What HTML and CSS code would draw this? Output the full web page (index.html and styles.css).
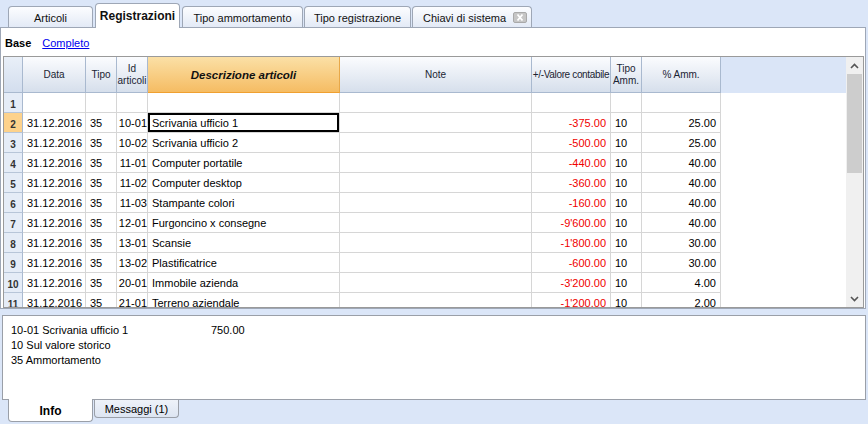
FILE: index.html
```html
<!DOCTYPE html>
<html lang="it">
<head>
<meta charset="utf-8">
<title>Registrazioni</title>
<link rel="stylesheet" href="styles.css">
</head>
<body>
<div class="app">
  <div class="tabbar">
    <div class="tab t-articoli">Articoli</div>
    <div class="tab active t-reg">Registrazioni</div>
    <div class="tab t-tipoamm">Tipo ammortamento</div>
    <div class="tab t-tiporeg">Tipo registrazione</div>
    <div class="tab t-chiavi"><span>Chiavi di sistema</span>
      <span class="close"><svg width="14" height="11" viewBox="0 0 14 11"><rect x="0.5" y="0.5" width="13" height="10" rx="1.5" fill="#c6c6c6" stroke="#a9a9a9"/><path d="M4.5 2.5 L9.5 8.5 M9.5 2.5 L4.5 8.5" stroke="#fff" stroke-width="1.8"/></svg></span>
    </div>
  </div>

  <div class="panel">
    <div class="toolbar"><span class="view-cur">Base</span><span class="view-link">Completo</span></div>
    <div class="grid">
      <div class="sheet">
        <div class="row head">
          <div class="c rn"></div>
          <div class="c">Data</div>
          <div class="c">Tipo</div>
          <div class="c two">Id<br>articoli</div>
          <div class="c hl">Descrizione articoli</div>
          <div class="c">Note</div>
          <div class="c tight">+/-Valore contabile</div>
          <div class="c two">Tipo<br>Amm.</div>
          <div class="c">% Amm.</div>
          <div class="c fill"></div>
        </div>
        <div class="row">
          <div class="c rn">1</div><div class="c"></div><div class="c"></div><div class="c"></div><div class="c"></div><div class="c"></div><div class="c"></div><div class="c"></div><div class="c"></div><div class="c fill"></div>
        </div>
        <div class="row cur">
          <div class="c rn">2</div><div class="c l">31.12.2016</div><div class="c l">35</div><div class="c r id">10-01</div><div class="c l sel">Scrivania ufficio 1</div><div class="c"></div><div class="c r neg">-375.00</div><div class="c l">10</div><div class="c r">25.00</div><div class="c fill"></div>
        </div>
        <div class="row">
          <div class="c rn">3</div><div class="c l">31.12.2016</div><div class="c l">35</div><div class="c r id">10-02</div><div class="c l">Scrivania ufficio 2</div><div class="c"></div><div class="c r neg">-500.00</div><div class="c l">10</div><div class="c r">25.00</div><div class="c fill"></div>
        </div>
        <div class="row">
          <div class="c rn">4</div><div class="c l">31.12.2016</div><div class="c l">35</div><div class="c r id">11-01</div><div class="c l">Computer portatile</div><div class="c"></div><div class="c r neg">-440.00</div><div class="c l">10</div><div class="c r">40.00</div><div class="c fill"></div>
        </div>
        <div class="row">
          <div class="c rn">5</div><div class="c l">31.12.2016</div><div class="c l">35</div><div class="c r id">11-02</div><div class="c l">Computer desktop</div><div class="c"></div><div class="c r neg">-360.00</div><div class="c l">10</div><div class="c r">40.00</div><div class="c fill"></div>
        </div>
        <div class="row">
          <div class="c rn">6</div><div class="c l">31.12.2016</div><div class="c l">35</div><div class="c r id">11-03</div><div class="c l">Stampante colori</div><div class="c"></div><div class="c r neg">-160.00</div><div class="c l">10</div><div class="c r">40.00</div><div class="c fill"></div>
        </div>
        <div class="row">
          <div class="c rn">7</div><div class="c l">31.12.2016</div><div class="c l">35</div><div class="c r id">12-01</div><div class="c l">Furgoncino x consegne</div><div class="c"></div><div class="c r neg">-9'600.00</div><div class="c l">10</div><div class="c r">40.00</div><div class="c fill"></div>
        </div>
        <div class="row">
          <div class="c rn">8</div><div class="c l">31.12.2016</div><div class="c l">35</div><div class="c r id">13-01</div><div class="c l">Scansie</div><div class="c"></div><div class="c r neg">-1'800.00</div><div class="c l">10</div><div class="c r">30.00</div><div class="c fill"></div>
        </div>
        <div class="row">
          <div class="c rn">9</div><div class="c l">31.12.2016</div><div class="c l">35</div><div class="c r id">13-02</div><div class="c l">Plastificatrice</div><div class="c"></div><div class="c r neg">-600.00</div><div class="c l">10</div><div class="c r">30.00</div><div class="c fill"></div>
        </div>
        <div class="row">
          <div class="c rn">10</div><div class="c l">31.12.2016</div><div class="c l">35</div><div class="c r id">20-01</div><div class="c l">Immobile azienda</div><div class="c"></div><div class="c r neg">-3'200.00</div><div class="c l">10</div><div class="c r">4.00</div><div class="c fill"></div>
        </div>
        <div class="row">
          <div class="c rn">11</div><div class="c l">31.12.2016</div><div class="c l">35</div><div class="c r id">21-01</div><div class="c l">Terreno aziendale</div><div class="c"></div><div class="c r neg">-1'200.00</div><div class="c l">10</div><div class="c r">2.00</div><div class="c fill"></div>
        </div>
      </div>
      <div class="vscroll">
        <div class="sbtn"><svg width="9" height="6" viewBox="0 0 9 6"><path d="M1 5 L4.5 1.5 L8 5" fill="none" stroke="#555" stroke-width="1.6"/></svg></div>
        <div class="strack"><div class="sthumb"></div></div>
        <div class="sbtn"><svg width="9" height="6" viewBox="0 0 9 6"><path d="M1 1 L4.5 4.5 L8 1" fill="none" stroke="#555" stroke-width="1.6"/></svg></div>
      </div>
    </div>
  </div>

  <div class="info">
    <div class="info-line"><span class="info-name">10-01 Scrivania ufficio 1</span><span>750.00</span></div>
    <div class="info-line">10 Sul valore storico</div>
    <div class="info-line">35 Ammortamento</div>
  </div>

  <div class="btabs">
    <div class="btab active">Info</div>
    <div class="btab">Messaggi (1)</div>
  </div>
</div>
</body>
</html>
```

FILE: styles.css
```css
* { box-sizing: border-box; }
html, body { margin: 0; padding: 0; }
body {
  background: #dbe6f8;
  font-family: "Liberation Sans", Arial, sans-serif;
  font-size: 11px;
  color: #000;
  width: 868px;
  height: 424px;
  overflow: hidden;
}
.app { width: 868px; height: 424px; }

/* top tabs */
.tabbar {
  height: 27px;
  display: flex;
  align-items: flex-end;
  padding-left: 8px;
}
.tab {
  height: 21px;
  border: 1px solid #9ea7b6;
  border-bottom: none;
  border-radius: 4px 4px 0 0;
  background: linear-gradient(#fcfdff, #e3eaf6);
  color: #111;
  font-size: 11px;
  display: flex;
  align-items: center;
  justify-content: center;
  padding-top: 2px;
  margin-right: 1px;
}
.tab.active {
  height: 25px;
  margin-bottom: -1px;
  background: #fff;
  font-weight: bold;
  font-size: 12px;
  position: relative;
  z-index: 1;
  padding-top: 0;
  padding-bottom: 1px;
  margin-right: 2px;
  margin-left: 1px;
}
.t-articoli { width: 85px; }
.t-reg { width: 85px; }
.t-tipoamm { width: 121px; }
.t-tiporeg { width: 107px; }
.t-chiavi { width: 120px; justify-content: flex-start; padding-left: 10px; padding-right: 4px; }
.t-chiavi .close { margin-left: auto; display: flex; margin-top: -1px; }

/* main panel */
.panel {
  width: 866px;
  height: 282px;
  border: 1px solid #9ea7b6;
  background: #fff;
  padding: 0 1px 0 2px;
}
.toolbar {
  height: 28px;
  display: flex;
  align-items: center;
  padding-left: 2px;
  padding-top: 2px;
  font-size: 11px;
}
.view-cur { font-weight: bold; color: #000; }
.view-link { color: #0000ee; text-decoration: underline; margin-left: 11px; }

.grid {
  width: 861px;
  height: 252px;
  border: 1px solid #9a9a9a;
  display: flex;
  overflow: hidden;
}
.sheet { width: 842px; overflow: hidden; }
.row {
  display: grid;
  grid-template-columns: 19px 63px 31px 31px 192px 192px 79px 31px 79px 125px;
  height: 20px;
}
.c {
  border-right: 1px solid #d6d6d6;
  border-bottom: 1px solid #d6d6d6;
  display: flex;
  align-items: center;
  white-space: nowrap;
  overflow: hidden;
  font-size: 11px;
  padding-top: 1px;
}
.c.l { padding-left: 4px; }
.c.r { justify-content: flex-end; padding-right: 4px; }
.c.id { padding-right: 0; }
.c.neg { color: #f00000; }
.c.fill { border: none; }
.c.rn {
  background: #e5ecf7;
  border-right: 1px solid #a9b9cf;
  border-bottom: 1px solid #b7c5d8;
  justify-content: center;
  font-size: 10px;
  font-weight: bold;
  color: #333;
  padding-top: 4px;
}
.row.cur .c.rn { background: #fdd28c; }
.c.sel { box-shadow: inset 0 0 0 2px #000; }

.row.head { height: 36px; }
.row.head .c {
  background: linear-gradient(#fbfcfe, #d6dfec);
  border-right: 1px solid #a9b9cf;
  border-bottom: 1px solid #a9b9cf;
  justify-content: center;
  text-align: center;
  font-size: 10px;
  color: #1a2433;
  line-height: 12px;
  padding-top: 1px;
}
.row.head .c.rn { background: linear-gradient(#e9eff8, #d3deee); }
.row.head .c.two { padding-top: 1px; }
.row.head .c.hl {
  background: linear-gradient(#fbe0a6, #f5bc63);
  border-bottom: 1px solid #f0a030;
  border-right: 1px solid #e8a848;
  font-weight: bold;
  font-style: italic;
  font-size: 11.5px;
  color: #111;
}
.row.head .c.tight { letter-spacing: -0.35px; }
.row.head .c.fill { background: #dae5f7; border: none; }

/* scrollbar */
.vscroll {
  width: 17px;
  background: #f0f0f0;
  display: flex;
  flex-direction: column;
}
.sbtn {
  height: 17px;
  display: flex;
  align-items: center;
  justify-content: center;
}
.strack { flex: 1; padding: 0 1px; }
.sthumb { height: 99px; background: #cdcdcd; }

/* info */
.info {
  margin: 6px 0 0 2px;
  width: 864px;
  height: 85px;
  border: 1px solid #9a9fa8;
  background: #fff;
  padding: 7px 0 0 8px;
  font-size: 11px;
}
.info-line { height: 15px; line-height: 15px; display: flex; }
.info-name { width: 200px; }

.btabs { display: flex; padding-left: 8px; align-items: flex-start; }
.btab {
  width: 85px;
  height: 18px;
  border: 1px solid #9a9fa8;
  border-top: none;
  border-radius: 0 0 4px 4px;
  background: linear-gradient(#eef2f9, #dde5f2);
  display: flex;
  align-items: center;
  justify-content: center;
  font-size: 11px;
  margin-right: 1px;
}
.btab.active {
  height: 23px;
  margin-top: -1px;
  background: #fff;
  font-weight: bold;
  font-size: 12px;
  padding-top: 2px;
}
```
